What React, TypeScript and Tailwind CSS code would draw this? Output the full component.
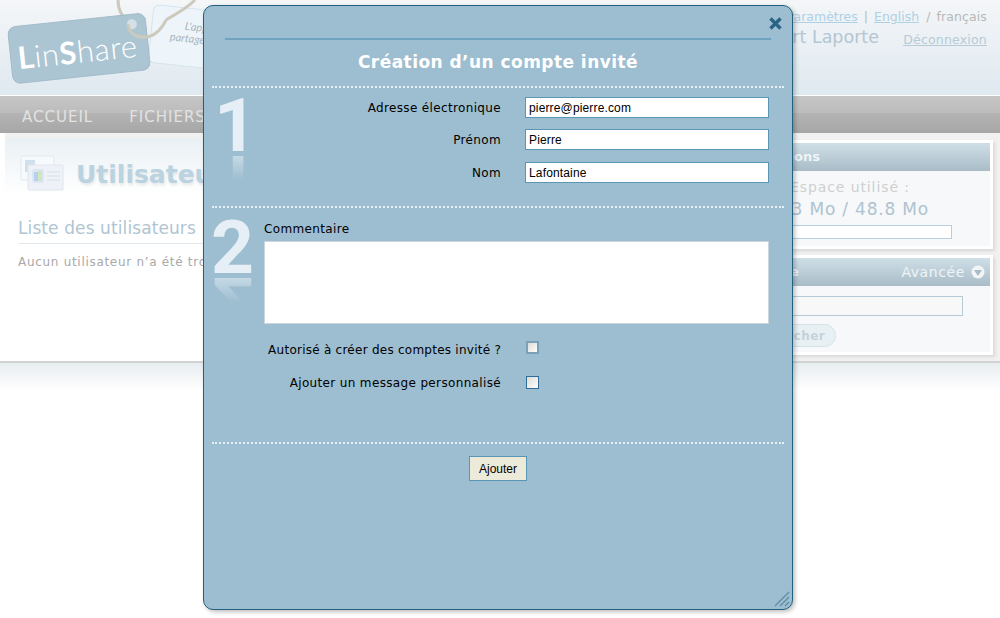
import React from 'react';

const FIELDS = [
  { label: 'Adresse électronique', value: 'pierre@pierre.com' },
  { label: 'Prénom', value: 'Pierre' },
  { label: 'Nom', value: 'Lafontaine' },
];

const StepNumber: React.FC<{ n: string }> = ({ n }) => (
  <div className="relative w-[44px] h-[86px] text-[#e6eff5] font-['Roboto',sans-serif] font-bold text-[75px] select-none">
    <div className="h-[55px] leading-[55px]">{n}</div>
    <div className="h-[30px] mt-[1px] leading-[55px] overflow-hidden -scale-y-100 origin-center [mask-image:linear-gradient(to_top,rgba(0,0,0,0.6),transparent_90%)] flex items-end">{n}</div>
  </div>
);

const Logo: React.FC = () => (
  <svg className="absolute left-0 top-0" width="230" height="95" viewBox="0 0 230 95">
    <g transform="rotate(6 185 45)">
      <rect x="150" y="8" width="80" height="58" rx="6" fill="#eef5fa" stroke="#d6e4ee" />
      <text x="183" y="30" fontSize="11" fill="#a8b6c0" fontStyle="italic" fontFamily="'Lato', sans-serif">L'application</text>
      <text x="169" y="42" fontSize="11" fill="#a8b6c0" fontStyle="italic" fontFamily="'Lato', sans-serif">partage</text>
    </g>
    <path d="M118 0 C118 10 122 18 131 24 M166 20 C172 16 185 10 195 0" fill="none" stroke="#ccc9bd" strokeWidth="3" />
    <g transform="rotate(-6 78 48)">
      <rect x="10" y="20" width="138" height="57" rx="8" fill="#acc5d3" stroke="#a2bbca" />
      <circle cx="134" cy="30" r="5" fill="#d5e0e6" />
      <text x="17" y="63" fontSize="31" letterSpacing="0.6" fill="#fff" fontFamily="'Lato', sans-serif" fontWeight="300">
        <tspan fontWeight="700">L</tspan>in<tspan fontWeight="700">S</tspan>hare
      </text>
    </g>
    <path d="M128 24 C128 31 134 38 146 37 C156 36 162 28 166 20" fill="none" stroke="#ccc9bd" strokeWidth="3" />
  </svg>
);

const UsersIcon: React.FC = () => (
  <svg width="44" height="36" viewBox="0 0 44 36">
    <rect x="1" y="1" width="33" height="24" rx="1" fill="#f7fafc" stroke="#e4e9ed" />
    <rect x="5" y="5" width="10" height="12" fill="#cfe0ec" />
    <rect x="8" y="10" width="35" height="25" rx="1" fill="#eef2f8" stroke="#e0e6ec" />
    <rect x="12" y="14" width="12" height="14" rx="2" fill="#dbe7f2" />
    <rect x="14" y="17" width="4" height="9" fill="#b9d0ec" />
    <rect x="18" y="16" width="4" height="10" fill="#cfe6c0" />
    <path d="M27 17h13M27 21h13M27 25h13" stroke="#d8dfe8" />
  </svg>
);

export default function App() {
  return (
    <div className="relative w-[1000px] h-[618px] overflow-hidden bg-white font-['DejaVu_Sans',sans-serif] text-[12px]">
      {/* Header */}
      <div className="relative h-[96px] border-b border-white bg-gradient-to-b from-[#f4f6f8] to-[#dfe9f0]">
        <Logo />
        <div className="absolute right-[13px] top-[8px] text-[#b8b8b8] text-[12.5px]">
          <span className="underline text-[#aed0e4]">Paramètres</span>
          <span className="mx-[6px]">|</span>
          <span className="underline text-[#aed0e4]">English</span>
          <span className="ml-[7px] mr-[6px]">/</span>
          <span className="tracking-[0.12px]">français</span>
        </div>
        <div className="absolute right-[121px] top-[24px] text-[17.5px] text-[#b3c6d2]">Robert Laporte</div>
        <div className="absolute right-[13px] top-[31px] underline tracking-[0.2px] text-[#b7cad6] text-[12.5px]">Déconnexion</div>
      </div>

      {/* Nav */}
      <div className="flex gap-[36px] h-[37px] pl-[22px] pt-[6px] items-center text-[15px] tracking-[1px] text-[#e2e2e2] bg-[linear-gradient(#c6c6c6,#bcbcbc_46%,#b4b4b4_46%,#a6a6a6)]">
        <span>ACCUEIL</span>
        <span>FICHIERS</span>
      </div>

      {/* Main */}
      <div className="flex h-[230px] border-b-2 border-[#d2d2d2] bg-[#f1f1f1]">
        <div className="flex-1 pt-[5px] bg-[linear-gradient(to_right,#fff_5px,#f1f1f1_5px)]">
          <div className="h-[223px] ml-[5px] bg-white">
            <div className="flex items-center gap-[12px] h-[56px] pl-[15px] pt-[14px] bg-gradient-to-b from-[#e9f0f4] to-white">
              <UsersIcon />
              <span className="mt-[4px] text-[25px] font-bold text-[#bad3e0] [text-shadow:1px_2px_3px_#e3e6e8]">Utilisateurs</span>
            </div>
            <div className="mx-[13px] mt-[22px] pb-[1px] border-b border-[#e1e9ef] text-[17px] tracking-[0.1px] text-[#afc5d3]">Liste des utilisateurs</div>
            <div className="ml-[13px] mt-[9px] tracking-[0.7px] text-[#a9a9a9]">Aucun utilisateur n’a été trouvé</div>
          </div>
        </div>
        <div className="flex flex-col gap-[6px] w-[290px] pr-[7px] pt-[7px] shrink-0">
          <div className="h-[109px] border-[3px] border-white bg-[#f6f8fa] shadow-[2px_2px_3px_#d8d8d8]">
            <div className="h-[28px] pl-[50px] flex items-center text-[13px] font-bold text-[#eef4f7] bg-gradient-to-b from-[#cfdfe8] to-[#a9bcc7]">Options</div>
            <div className="pl-[77px] pt-[6px] text-[14px] tracking-[0.9px] text-[#cfcfcf]">Espace utilisé :</div>
            <div className="pl-[67px] -mt-[1px] text-[17px] tracking-[0.8px] text-[#aec3d0]">13 Mo / 48.8 Mo</div>
            <div className="ml-[60px] mt-[2px] w-[179px] h-[14px] border border-[#b5d0dc] bg-white"></div>
          </div>
          <div className="h-[100px] border-[3px] border-white bg-[#f6f8fa] shadow-[2px_2px_3px_#d8d8d8]">
            <div className="h-[28px] pl-[9px] pr-[5px] flex items-center justify-between text-[#eef4f7] text-[13px] bg-gradient-to-b from-[#cfdfe8] to-[#a9bcc7]">
              <span className="font-bold">Recherche</span>
              <span className="flex items-center gap-[6px] text-[14px] tracking-[0.6px]">
                Avancée
                <svg width="14" height="14" viewBox="0 0 14 14">
                  <circle cx="7" cy="7" r="6.5" fill="#f2f6f8" />
                  <path d="M3 5h8l-4 6z" fill="#a9bcc7" />
                </svg>
              </span>
            </div>
            <div className="ml-[60px] mt-[10px] w-[190px] h-[20px] border border-[#b5cbd8] bg-[#f8f8f8]"></div>
            <div className="ml-[60px] mt-[8px] w-[63px] h-[23px] rounded-full border border-[#d3e2ea] bg-[#e9f0f4] flex items-center justify-end pr-[10px] tracking-[0.4px] whitespace-nowrap font-bold text-[#c4d2da]">Chercher</div>
          </div>
        </div>
      </div>

      {/* Footer band */}
      <div className="h-[27px] bg-gradient-to-b from-[#e8edf0] to-white"></div>

      {/* Modal */}
      <div className="absolute left-[203px] top-[5px] w-[590px] h-[605px] flex flex-col rounded-[10px] border border-[#23607f] bg-[#9dbdd0] shadow-[2px_2px_4px_rgba(0,0,0,0.25)] pt-[10px] px-[8px] tracking-[0.35px]">
        <svg className="absolute right-[9px] top-[10px]" width="15" height="15" viewBox="0 0 15 15">
          <path d="M2.5 2.5l10 10M12.5 2.5l-10 10" stroke="#2a6485" strokeWidth="3.4" />
        </svg>
        <svg className="absolute right-[2px] bottom-[2px]" width="16" height="16" viewBox="0 0 16 16">
          <path d="M1 15L15 1M6 15L15 6M11 15l4-4" stroke="#5f8ba5" strokeWidth="1.3" />
        </svg>

        <div className="mx-[13px] mt-[22px] h-[2px] bg-[#6fa3bf]"></div>
        <div className="mt-[10px] h-[24px] text-center text-[17px] tracking-[0.45px] leading-[24px] font-bold text-white">Création d’un compte invité</div>

        <div className="mt-[12px] h-[2px] border-t-2 border-dotted border-[#e7eff4]"></div>

        {/* Section 1 */}
        <div className="flex h-[118px]">
          <div className="mt-[10px] pl-[2px] w-[52px]"><StepNumber n="1" /></div>
          <div className="flex-1 flex flex-col gap-[11px] pt-[9px]">
            {FIELDS.map(f => (
              <div key={f.label} className="flex items-center h-[21px] leading-none last:mt-[1px]">
                <label className="w-[237px] text-right text-black">{f.label}</label>
                <input
                  readOnly
                  value={f.value}
                  className="ml-[24px] w-[244px] h-[21px] px-[3px] border border-[#5a96b4] bg-white text-black font-['Liberation_Sans',sans-serif] text-[12px] tracking-[0.15px]"
                />
              </div>
            ))}
          </div>
        </div>

        <div className="h-[2px] border-t-2 border-dotted border-[#e7eff4]"></div>

        {/* Section 2 */}
        <div className="flex h-[234px]">
          <div className="mt-[12px] -ml-[1px] w-[53px]"><StepNumber n="2" /></div>
          <div className="flex-1 flex flex-col">
            <div className="mt-[14px] h-[15px] leading-[15px] text-black">Commentaire</div>
            <div className="mt-[4px] w-[505px] h-[83px] bg-white border border-[#c9d6de]"></div>
            <div className="flex items-center mt-[17px] h-[14px] -ml-[52px]">
              <label className="w-[289px] mt-[4px] text-right text-black tracking-[0.25px]">Autorisé à créer des comptes invité ?</label>
              <span className="ml-[25px] -mt-[2px] w-[13px] h-[13px] border-2 border-[#7ba1b9] bg-gradient-to-br from-[#dcdcd6] to-white"></span>
            </div>
            <div className="flex items-center mt-[21px] h-[14px] -ml-[52px]">
              <label className="w-[289px] text-right text-black">Ajouter un message personnalisé</label>
              <span className="ml-[25px] -mt-[2px] w-[13px] h-[13px] border border-[#2f6c99] bg-gradient-to-br from-[#dcdcd6] to-white"></span>
            </div>
          </div>
        </div>

        <div className="h-[2px] border-t-2 border-dotted border-[#e7eff4]"></div>

        <div className="flex justify-center mt-[12px]">
          <button className="w-[58px] h-[25px] border border-[#5a96b4] bg-[#ecead9] text-black font-['Liberation_Sans',sans-serif] text-[12px] tracking-normal">Ajouter</button>
        </div>
      </div>
    </div>
  );
}
